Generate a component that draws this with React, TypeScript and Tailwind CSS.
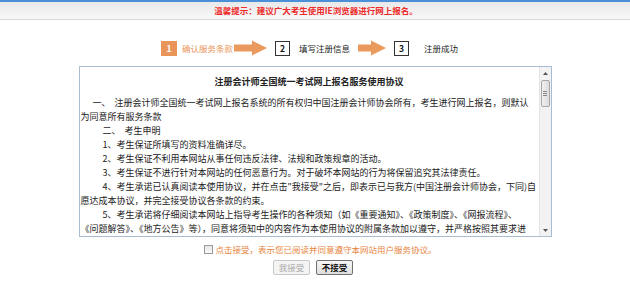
const cjk = "font-['Noto_Sans_CJK_SC','Noto_Sans',sans-serif]";

function Arrow({ shaft }: { shaft: number }) {
  const w = shaft + 15;
  return (
    <svg width={w} height="16" viewBox={`0 0 ${w} 16`} className="block">
      <polygon
        points={`0,4.5 ${shaft},4.5 ${shaft},0.5 ${w},8 ${shaft},15.5 ${shaft},11.5 0,11.5`}
        fill="#eb9a5e"
      />
    </svg>
  );
}

function Scrollbar() {
  return (
    <div className="flex w-[12px] flex-col border-l border-[#e3e3e3] bg-[#f2f2f2]">
      <div className="flex h-[12px] items-center justify-center">
        <svg width="5" height="3" viewBox="0 0 5 3">
          <polygon points="0,3 2.5,0 5,3" fill="#555" />
        </svg>
      </div>
      <div className="mx-[1px] mt-[1px] flex h-[27px] flex-col items-center justify-center gap-[1px] rounded-[2px] border border-[#a8a8a8] bg-gradient-to-r from-[#f0f0f0] to-[#dcdcdc]">
        <div className="h-[1px] w-[4px] bg-[#888]" />
        <div className="h-[1px] w-[4px] bg-[#888]" />
        <div className="h-[1px] w-[4px] bg-[#888]" />
      </div>
      <div className="flex-1" />
      <div className="flex h-[12px] items-center justify-center">
        <svg width="5" height="3" viewBox="0 0 5 3">
          <polygon points="0,0 2.5,3 5,0" fill="#555" />
        </svg>
      </div>
    </div>
  );
}

export default function App() {
  return (
    <div className={`h-[289px] w-[630px] bg-white ${cjk}`}>
      {/* 顶部提示 */}
      <div className="h-[2px] bg-[#4a8fd8]" />
      <div className="flex h-[18px] items-center justify-center border-b border-[#d9d9d9] bg-gradient-to-b from-[#e9e9e9] to-[#f8f8f8] pl-[2px] text-[8.5px] font-bold text-[#ee2a2a]">
        温馨提示：建议广大考生使用IE浏览器进行网上报名。
      </div>

      {/* 步骤 */}
      <div className="mt-[20px] flex h-[16px] items-center pl-[161px] text-[8.5px] leading-none">
        <div className="flex h-[15px] w-[16px] items-center justify-center bg-[#e9955a] font-bold text-white">
          1
        </div>
        <span className="ml-[5px] text-[#e9955a]">确认服务条款</span>
        <div className="ml-[1px]">
          <Arrow shaft={18} />
        </div>
        <div className="ml-[8px] flex h-[15px] w-[15px] items-center justify-center border border-[#333] font-bold text-[#111]">
          2
        </div>
        <span className="ml-[9px] text-[#222]">填写注册信息</span>
        <div className="ml-[8px]">
          <Arrow shaft={13} />
        </div>
        <div className="ml-[8px] flex h-[15px] w-[15px] items-center justify-center border border-[#333] font-bold text-[#111]">
          3
        </div>
        <span className="ml-[15px] text-[#222]">注册成功</span>
      </div>

      {/* 协议内容 */}
      <div className="mx-auto mt-[10px] flex h-[171px] w-[473px] border border-[#a9bcd2] bg-white">
        <div className="flex-1 overflow-hidden px-[1px] pt-[8px] text-[9px] leading-[14px] text-[#222]">
          <div className="text-center font-bold">注册会计师全国统一考试网上报名服务使用协议</div>
          <div className="mt-[7px]">
            <p className="indent-[12px]">
              一、&nbsp;&nbsp;注册会计师全国统一考试网上报名系统的所有权归中国注册会计师协会所有，考生进行网上报名，则默认
              <br />
              为同意所有服务条款
            </p>
            <p className="indent-[22px]">二、&nbsp;&nbsp;考生申明</p>
            <p className="indent-[22px]">1、考生保证所填写的资料准确详尽。</p>
            <p className="indent-[22px]">2、考生保证不利用本网站从事任何违反法律、法规和政策规章的活动。</p>
            <p className="indent-[22px]">3、考生保证不进行针对本网站的任何恶意行为。对于破坏本网站的行为将保留追究其法律责任。</p>
            <p className="indent-[22px]">
              4、考生承诺已认真阅读本使用协议，并在点击"我接受"之后，即表示已与我方(中国注册会计师协会，下同)自
              <br />
              愿达成本协议，并完全接受协议各条款的约束。
            </p>
            <p className="indent-[22px]">
              5、考生承诺将仔细阅读本网站上指导考生操作的各种须知（如《重要通知》、《政策制度》、《网报流程》、
              <br />
              《问题解答》、《地方公告》等），同意将须知中的内容作为本使用协议的附属条款加以遵守，并严格按照其要求进
            </p>
          </div>
        </div>
        <Scrollbar />
      </div>

      {/* 接受 */}
      <div className="mt-[6px] flex h-[12px] items-center justify-center gap-[2px] pl-[11px] text-[8.5px] leading-[12px] text-[#e8843c]">
        <span className="block h-[9px] w-[9px] border border-[#9a9a9a] bg-gradient-to-b from-[#e6e6e6] to-[#fafafa]" />
        <span>点击接受，表示您已阅读并同意遵守本网站用户服务协议。</span>
      </div>
      <div className="mt-[5px] flex justify-center gap-[6px] pr-[4px] text-[8.5px]">
        <button className="flex h-[15px] w-[37px] items-center justify-center rounded-[2px] border border-[#c8c8c8] bg-[#f4f4f4] p-0 leading-[11px] text-[#a8a8a8]">
          我接受
        </button>
        <button className="flex h-[15px] w-[37px] items-center justify-center rounded-[2px] border border-[#707070] bg-gradient-to-b from-[#f6f6f6] to-[#dedede] p-0 font-bold leading-[11px] text-[#111]">
          不接受
        </button>
      </div>
    </div>
  );
}
